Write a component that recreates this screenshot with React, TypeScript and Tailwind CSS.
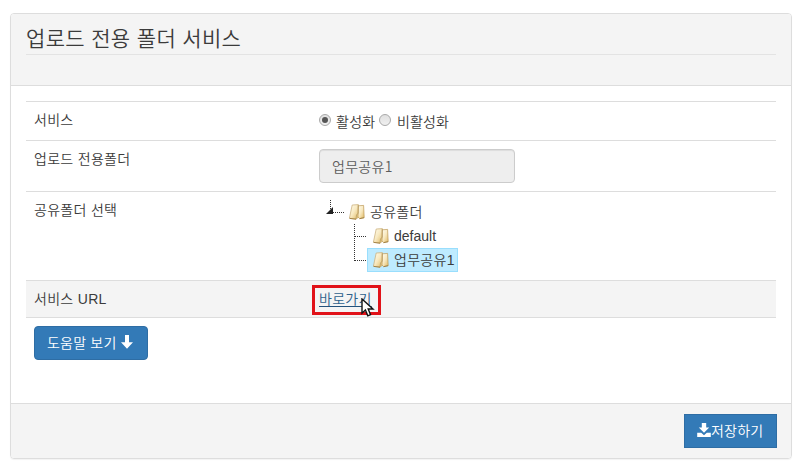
import type { ReactNode } from "react"

function FolderIcon() {
  return (
    <svg width="16" height="16" viewBox="0 0 16 16" className="shrink-0">
      <defs>
        <linearGradient id="folder" x1="0" y1="0" x2="1" y2="1">
          <stop offset="0" stopColor="#fffdf0" />
          <stop offset=".5" stopColor="#f8e9c0" />
          <stop offset="1" stopColor="#dfb862" />
        </linearGradient>
      </defs>
      <path d="M3.2 1 9.4.6v12.6L7 15.2.4 14.2z" fill="url(#folder)" stroke="#c7ab74" strokeWidth=".7" />
      <path d="M9.4 1.8 14.6 1.4 15.2 13.6l-4.6 1L9 13z" fill="url(#folder)" stroke="#bb9855" strokeWidth=".7" />
      <path d="M9.2 1v8.4L7.6 10.6 7 15" fill="none" stroke="#b59a60" strokeWidth=".7" />
      <path d="M.6 14.4 7 15.2M10.6 14.7l4.5-1" fill="none" stroke="#967333" strokeWidth=".8" />
    </svg>
  )
}

function Row({ label, className, children }: { label: string; className: string; children: ReactNode }) {
  return (
    <div className={`flex border-t border-[#ddd] px-2 pt-2 ${className}`}>
      <div className="w-[285px] shrink-0 leading-5 tracking-[0.3px]">{label}</div>
      {children}
    </div>
  )
}

function Radio({ checked }: { checked?: boolean }) {
  return (
    <span className="flex h-3 w-3 shrink-0 items-center justify-center rounded-full border border-[#a9a9a9] bg-gradient-to-b from-[#e0e0e0] to-[#f0f0f0]">
      {checked && <span className="h-[6px] w-[6px] rounded-full bg-[#555]" />}
    </span>
  )
}

export default function App() {
  return (
    <div className="h-[473px] bg-white px-[10px] pt-[13px] font-['Liberation_Sans','Noto_Sans_CJK_KR',sans-serif] text-sm font-[350] text-[#3b3b3b]">
      <div className="flex h-[446px] w-[782px] flex-col overflow-hidden rounded border border-[#ddd] shadow-[0_1px_1px_rgba(0,0,0,0.05)]">
        {/* Heading */}
        <div className="h-[72px] shrink-0 border-b border-[#ddd] bg-[#f4f4f4] px-[15px]">
          <h1 className="h-[41px] border-b border-[#e3e3e3] pt-[11px] text-[21px] leading-[28px] tracking-[0.35px]">
            업로드 전용 폴더 서비스
          </h1>
        </div>

        {/* Settings table */}
        <div className="flex-1 px-[15px] pt-[15px]">
          <Row label="서비스" className="h-[39px]">
            <div className="flex h-[24px] items-center leading-5">
              <span className="pb-[4px]"><Radio checked /></span>
              <span className="ml-[5px] w-[43px] tracking-[0.3px]">활성화</span>
              <span className="pb-[4px]"><Radio /></span>
              <span className="ml-[6px] tracking-[0.1px]">비활성화</span>
            </div>
          </Row>
          <Row label="업로드 전용폴더" className="h-[51px]">
            <div className="flex h-[34px] w-[196px] items-center rounded border border-[#ccc] bg-[#eee] px-3 pb-px font-['Noto_Sans_CJK_KR',sans-serif] tracking-[0.3px] text-[#5c5c5c] shadow-[inset_0_1px_1px_rgba(0,0,0,0.075)]">
              업무공유1
            </div>
          </Row>
          <Row label="공유폴더 선택" className="h-[89px]">
            <div className="flex">
              <svg width="48" height="72" viewBox="0 0 48 72" className="shrink-0" shapeRendering="crispEdges">
                <path d="M11.5 0v12M14 12.5h11M35.5 24v37M36 36.5h12M36 60.5h12" fill="none" stroke="#333" strokeDasharray="1 1" />
                <path d="M14 7v7H7z" fill="#222" shapeRendering="auto" />
              </svg>
              <div className="-ml-[18px]">
                <div className="flex h-6 items-center gap-[5px] tracking-[0.3px]"><FolderIcon />공유폴더</div>
                <div className="ml-6 flex h-6 items-center gap-[5px]"><FolderIcon />default</div>
                <div className="ml-[18px] flex h-6 w-[91px] items-center gap-[5px] border border-[#99defd] bg-[#beebff] pl-[5px] tracking-[0.3px]">
                  <FolderIcon />업무공유1
                </div>
              </div>
            </div>
          </Row>
          <Row label="서비스 URL" className="h-[37px] bg-[#f4f4f4]">
            <div className="relative h-5 leading-5">
              <a href="#" className="tracking-[0.3px] text-[#2f618c] underline decoration-[#23527c] underline-offset-2">바로가기</a>
              {/* Highlight box and mouse pointer */}
              <div className="absolute -left-[7px] -top-[4px] h-[30px] w-[69px] border-3 border-[#e11219]" />
              <svg width="14" height="20" viewBox="0 0 14 20" className="absolute left-[42px] top-[9px]">
                <path d="M1 1v14.2l3.4-3.2 2.4 5.8 2.7-1.1L7.2 11H12z" fill="#fff" stroke="#111" strokeWidth="1.4" />
              </svg>
            </div>
          </Row>
          <div className="border-t border-[#ddd] p-2">
            <button className="flex h-[34px] w-[114px] items-center rounded border border-[#2e6da4] bg-[#337ab7] pl-3 tracking-[0.2px] text-white">
              도움말 보기
              <svg width="12" height="14" viewBox="0 0 12 14" className="mb-[2px] ml-[4px]">
                <path d="M4 0h4v7.2h4L6 13.8 0 7.2h4z" fill="#fff" />
              </svg>
            </button>
          </div>
        </div>

        {/* Footer */}
        <div className="flex h-[55px] shrink-0 justify-end border-t border-[#ddd] bg-[#f4f4f4] pr-[14px] pt-[10px]">
          <button className="flex h-[34px] w-[93px] items-center border border-[#2e6da4] bg-[#337ab7] pl-3 tracking-[0.2px] text-white">
            <svg width="14" height="14" viewBox="0 0 14 14" className="mb-[3px]">
              <path d="M4.8 0h4.4v4.5h3L7 9.7 1.8 4.5h3z" fill="#fff" />
              <path d="M.2 9.8h4L7 12.2l2.8-2.4h4V14H.2z" fill="#fff" />
            </svg>
            저장하기
          </button>
        </div>
      </div>
    </div>
  )
}
